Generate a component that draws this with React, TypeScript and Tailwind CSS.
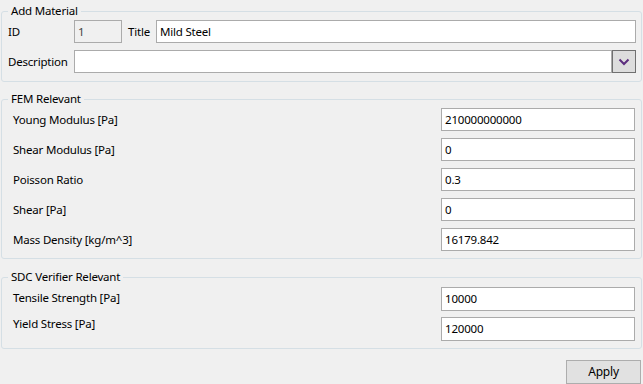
import React from "react";

const fieldLabels = [
  { label: "Young Modulus [Pa]", value: "210000000000" },
  { label: "Shear Modulus [Pa]", value: "0" },
  { label: "Poisson Ratio", value: "0.3" },
  { label: "Shear [Pa]", value: "0" },
  { label: "Mass Density [kg/m^3]", value: "16179.842" },
];

function TextBox({
  value,
  readOnly = false,
  className = "",
}: {
  value?: string;
  readOnly?: boolean;
  className?: string;
}) {
  return (
    <div
      className={`flex items-center border border-[#ababab] pl-[3px] leading-4 ${
        readOnly ? "bg-[#f0f0f0] text-[#444]" : "bg-white"
      } ${className}`}
    >
      {value}
    </div>
  );
}

function Group({
  title,
  className = "",
  children,
}: {
  title: string;
  className?: string;
  children: React.ReactNode;
}) {
  return (
    <fieldset
      className={`mx-px rounded-[3px] border border-[#d5dfe5] pl-[6px] ${className}`}
    >
      <legend className="px-[3px] leading-4">{title}</legend>
      {children}
    </fieldset>
  );
}

export default function App() {
  return (
    <div className="h-[384px] w-[643px] overflow-hidden bg-[#f0f0f0] pt-[3px] font-['Segoe_UI','Noto_Sans',sans-serif] text-[11.5px] tracking-[-0.2px] text-black">
      <Group title="Add Material" className="pb-[8px] pr-[5px]">
        <div className="mt-px flex h-[23px] items-center">
          <span className="w-[66px]">ID</span>
          <TextBox value="1" readOnly className="h-[23px] w-[48px]" />
          <span className="ml-[6px] w-[28px]">Title</span>
          <TextBox value="Mild Steel" className="h-[23px] flex-1" />
        </div>
        <div className="mt-[7px] flex h-[23px] items-center">
          <span className="w-[66px]">Description</span>
          <TextBox className="h-[23px] flex-1" />
          <div className="flex h-[23px] w-[24px] items-center justify-center border border-[#707070] bg-[#dddddd]">
            <svg width="12" height="8" viewBox="0 0 12 8">
              <path d="M1.5 1.5 L6 6 L10.5 1.5" fill="none" stroke="#5c2d7e" strokeWidth="2" />
            </svg>
          </div>
        </div>
      </Group>

      <Group title="FEM Relevant" className="mt-[9px] pb-[7px] pr-[6px]">
        <div className="mt-px flex flex-col gap-[7px]">
          {fieldLabels.map((f) => (
            <div key={f.label} className="flex h-[23px] items-center justify-between">
              <span className="pl-[5px]">{f.label}</span>
              <TextBox value={f.value} className="h-[23px] w-[194px]" />
            </div>
          ))}
        </div>
      </Group>

      <Group title="SDC Verifier Relevant" className="mt-[10px] pb-[7px] pr-[6px]">
        <div className="mt-[2px] flex justify-between">
          <div className="flex flex-col gap-[10px] pl-[5px] pt-[3px]">
            <span className="leading-4">Tensile Strength [Pa]</span>
            <span className="leading-4">Yield Stress [Pa]</span>
          </div>
          <div className="flex flex-col gap-[6px]">
            <TextBox value="10000" className="h-[24px] w-[194px]" />
            <TextBox value="120000" className="h-[24px] w-[194px]" />
          </div>
        </div>
      </Group>

      <div className="mt-[11px] flex justify-end pr-[2px]">
        <button className="h-[24px] w-[75px] border border-[#adadad] bg-[#e1e1e1] text-[12px] leading-4">
          Apply
        </button>
      </div>
    </div>
  );
}
